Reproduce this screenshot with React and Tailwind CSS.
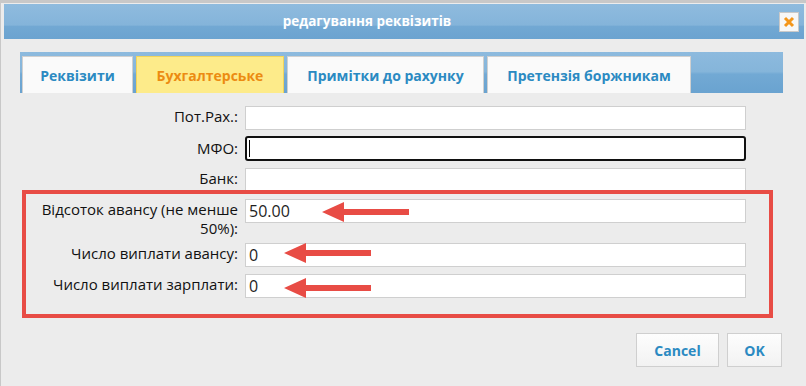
import React from "react";

const font = { fontFamily: '"Open Sans", "Noto Sans", sans-serif' };

function Label({ children, pt = "pt-[1px]" }) {
  return (
    <div className={"w-[218px] mr-[7px] text-right text-[15px] leading-[19px] text-[#111] " + pt}>
      {children}
    </div>
  );
}

function Field({ value }) {
  return (
    <div className="w-[501px] h-[24px] bg-white border border-[#cfcfcf] pl-[3px] text-[16px] leading-[22px] text-[#1e1e1e]">
      {value}
    </div>
  );
}

function Arrow({ x, y, len }) {
  return (
    <polygon
      points={`${x},${y} ${x + 22},${y - 10} ${x + 22},${y - 3} ${x + len},${y - 3} ${x + len},${y + 3} ${x + 22},${y + 3} ${x + 22},${y + 10}`}
      fill="#e84c45"
    />
  );
}

export default function App() {
  return (
    <div
      className="relative w-[806px] h-[386px] bg-[#ececec] border-l border-t-[3px] border-[#c8c8c8] overflow-hidden"
      style={font}
    >
      {/* Title bar */}
      <div className="ml-[3px] mt-[1px] w-[800px] h-[35px] bg-[linear-gradient(to_bottom,#8fbbde_0%,#84b4da_60%,#72a8d3_64%,#6ba3d0_100%)] flex items-center relative">
        <div className="w-full text-center pr-[76px] pl-[2px] text-white font-bold text-[13.5px]">
          редагування реквізитів
        </div>
        <div className="absolute left-[775px] top-[8px] w-[20px] h-[20px] bg-[#f7f7f7] border border-[#c9c9c9] flex items-center justify-center">
          <svg width="12" height="12" viewBox="0 0 12 12">
            <path d="M2 2 L10 10 M10 2 L2 10" stroke="#f4961a" strokeWidth="3" strokeLinecap="butt" />
          </svg>
        </div>
      </div>

      {/* Tabs */}
      <div className="ml-[19px] mt-[13px] w-[763px] h-[41px] bg-[linear-gradient(to_bottom,#8dbade_0%,#85b5da_48%,#72a9d4_54%,#6aa3d0_100%)] flex items-end pl-[2px] gap-[3px]">
        <div className="w-[111px] h-[37px] bg-[#fafafa] border border-b-0 border-[#d0d0d0] flex items-center justify-center text-[14px] font-bold text-[#2b8ac2]">
          Реквізити
        </div>
        <div className="w-[148px] h-[37px] bg-[#fdeb8a] border border-b-0 border-[#f2d45a] flex items-center justify-center text-[14px] font-bold text-[#ec8b12]">
          Бухгалтерське
        </div>
        <div className="w-[197px] h-[37px] bg-[#fafafa] border border-b-0 border-[#d0d0d0] flex items-center justify-center text-[14px] font-bold text-[#2b8ac2]">
          Примітки до рахунку
        </div>
        <div className="w-[204px] h-[37px] bg-[#fafafa] border border-b-0 border-[#d0d0d0] flex items-center justify-center text-[14px] font-bold text-[#2b8ac2]">
          Претензія боржникам
        </div>
      </div>

      {/* Form */}
      <div className="mt-[13px] ml-[19px] flex flex-col">
        <div className="h-[30px] flex items-start">
          <Label>Пот.Рах.:</Label>
          <Field value="" />
        </div>
        <div className="h-[32px] flex items-start">
          <Label pt="pt-[3px]">МФО:</Label>
          <div className="relative w-[501px] h-[25px] bg-white border-2 border-[#111] rounded-[3px]">
            <div className="absolute left-[2px] top-[2px] w-px h-[17px] bg-black" />
          </div>
        </div>
        <div className="h-[31px] flex items-start">
          <Label>Банк:</Label>
          <Field value="" />
        </div>
        <div className="h-[44px] flex items-start">
          <Label>Відсоток авансу (не менше 50%):</Label>
          <Field value="50.00" />
        </div>
        <div className="h-[31px] flex items-start">
          <Label>Число виплати авансу:</Label>
          <Field value="0" />
        </div>
        <div className="h-[31px] flex items-start">
          <Label>Число виплати зарплати:</Label>
          <Field value="0" />
        </div>
      </div>

      {/* Buttons */}
      <div className="absolute left-[635px] top-[330px] flex gap-[8px]">
        <div className="w-[83px] h-[34px] bg-[linear-gradient(to_bottom,#fdfdfd,#f2f2f2)] border border-[#cfcfcf] flex items-center justify-center text-[14px] font-bold text-[#2b8ac2]">
          Cancel
        </div>
        <div className="w-[55px] h-[34px] bg-[linear-gradient(to_bottom,#fdfdfd,#f2f2f2)] border border-[#cfcfcf] flex items-center justify-center text-[14px] font-bold text-[#2b8ac2]">
          OK
        </div>
      </div>

      {/* Annotations */}
      <div className="absolute left-[21px] top-[187px] w-[751px] h-[128px] border-[4px] border-[#e84c45]" />
      <svg className="absolute left-0 top-[-3px]" width="806" height="386">
        <Arrow x={321} y={212} len={87} />
        <Arrow x={283} y={253} len={87} />
        <Arrow x={283} y={288} len={87} />
      </svg>
    </div>
  );
}
